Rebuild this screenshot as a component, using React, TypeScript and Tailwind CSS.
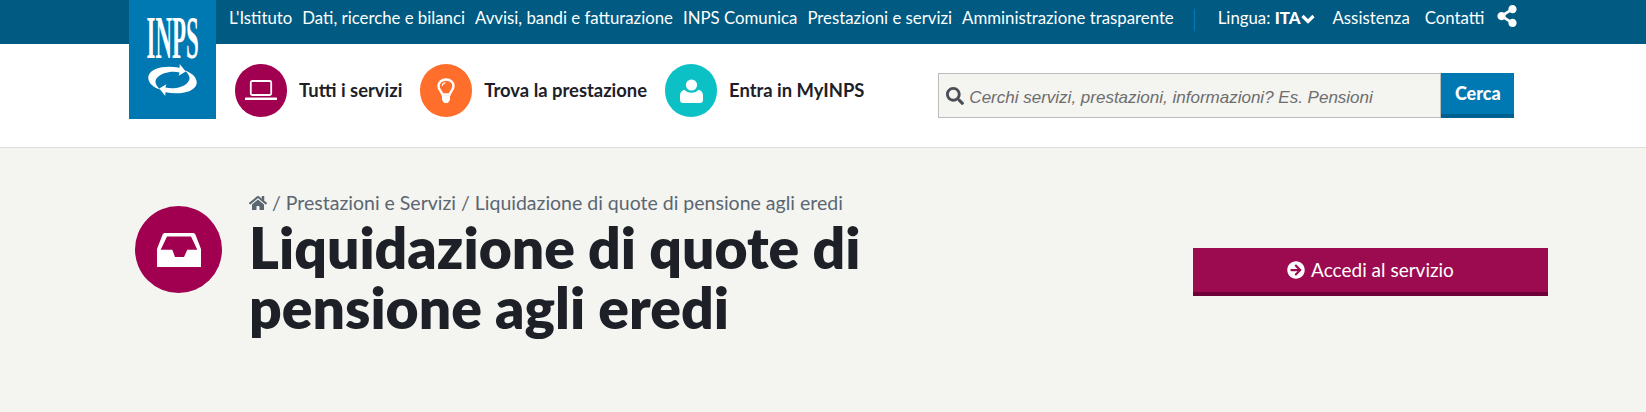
import React from "react";
import { FaArrowCircleRight, FaHome, FaSearch, FaShareAlt } from "react-icons/fa";

const topLinks = [
  "L'Istituto",
  "Dati, ricerche e bilanci",
  "Avvisi, bandi e fatturazione",
  "INPS Comunica",
  "Prestazioni e servizi",
  "Amministrazione trasparente",
];

const LaptopIcon = () => (
  <svg width="32" height="21" viewBox="0 0 32 21" fill="none" stroke="white">
    <rect x="5.800" y="1" width="20.400" height="14" rx="1.500" strokeWidth="1.800" />
    <path d="M1 18.800h30" strokeWidth="2.600" strokeLinecap="round" />
  </svg>
);

const BulbIcon = () => (
  <svg width="18" height="25" viewBox="0 0 18 25" fill="none">
    <path
      d="M9 1.500C4.500 1.500 1.500 4.500 1.500 8c0 3.700 3.200 5.500 3.900 8.500h7.200c.7-3 3.900-4.800 3.900-8.500 0-3.500-3-6.500-7.500-6.500z"
      stroke="white"
      strokeWidth="2.400"
    />
    <path d="M5 17.500h8v4.500L10.800 25H7.200L5 22z" fill="white" />
    <path d="M5.300 8c0-1.900 1.500-3.200 3.200-3.200" stroke="white" strokeWidth="1.200" />
  </svg>
);

const UserIcon = () => (
  <svg width="23" height="24" viewBox="0 0 23 24" fill="white">
    <circle cx="11.500" cy="6" r="5.600" />
    <path d="M4.500 10.800c1.500 2 4 3 7 3s5.500-1 7-3c2.800.8 4.500 2.800 4.500 6v4.200c0 1.700-1.300 3-3 3H3c-1.700 0-3-1.300-3-3v-4.200c0-3.200 1.700-5.200 4.500-6z" />
  </svg>
);

const InboxIcon = () => (
  <svg width="44" height="34" viewBox="0 0 44 34" fill="white">
    <path
      fillRule="evenodd"
      d="M8 0h28c1 0 2 .6 2.400 1.600L44 16v18H0V16L5.600 1.600C6 .6 7 0 8 0zM10 3.500L3.700 16.800h11.600L18 24h9l3.300-7.200h10L34 3.500z"
    />
  </svg>
);

const LogoSwirl = () => (
  <svg width="49" height="32" viewBox="0 0 48 30" fill="white" preserveAspectRatio="none">
    <path d="M37 7L31 0v3.500C18 1 3 3 .5 11c-1.500 6 4.500 11 11.500 13-5-4-6-8-3-11 4-5 15-7 22-5l-1 3z" />
    <path d="M11 23l6 7v-3.500c13 2.500 28 .5 30.500-7.500C49 13 43 8 36 6c5 4 6 8 3 11-4 5-15 7-22 5l1-3z" />
  </svg>
);

const ChevronIcon = () => (
  <svg width="14" height="10" viewBox="0 0 14 10" fill="none" stroke="white" strokeWidth="3.200">
    <path d="M1.500 2l5.500 5.500L12.500 2" />
  </svg>
);

const services = [
  { label: "Tutti i servizi", bg: "bg-[#a0004f]", icon: <LaptopIcon /> },
  { label: "Trova la prestazione", bg: "bg-[#ff6f2b]", icon: <BulbIcon /> },
  { label: "Entra in MyINPS", bg: "bg-[#0bc1c6]", icon: <UserIcon /> },
];

export default function App() {
  return (
    <div className="min-h-[412px] bg-[#f4f4f1] font-['Lato',sans-serif] overflow-hidden">
      <header className="relative bg-white border-b border-[#dedede]">
        <div className="absolute left-[129px] top-0 flex h-[119px] w-[87px] flex-col items-center bg-[#0079b3] pt-[10px]">
          <span className="h-[54px] scale-x-[0.37] font-['Liberation_Serif',serif] text-[62px] font-bold leading-[54px] text-white">
            INPS
          </span>
          <LogoSwirl />
        </div>

        <div className="flex h-[44px] items-center bg-[#005a82] pb-[8px] pl-[229px] text-[16.8px] text-white">
          <nav className="flex gap-[10px]">
            {topLinks.map((link) => (
              <a key={link}>{link}</a>
            ))}
          </nav>
          <div className="ml-[20px] mt-[4px] h-[22px] w-px bg-[#0079b3]" />
          <div className="ml-[23px] flex items-center">
            Lingua:&nbsp;<b className="font-black">ITA</b>
            <span className="ml-[1px] mt-[2px]">
              <ChevronIcon />
            </span>
          </div>
          <a className="ml-[17px]">Assistenza</a>
          <a className="ml-[15px]">Contatti</a>
          <FaShareAlt className="mb-[4px] ml-[12px] text-[22px]" />
        </div>

        <div className="flex h-[103px] pl-[235px] pt-[20px]">
          {services.map((item) => (
            <a key={item.label} className="mr-[18px] flex h-[53px] items-center">
              <span className={`flex h-[53px] w-[52px] items-center justify-center rounded-full ${item.bg}`}>
                {item.icon}
              </span>
              <span className="ml-[12px] text-[18.4px] font-bold text-[#1d2027]">{item.label}</span>
            </a>
          ))}

          <form className="ml-[56px] mt-[9px] flex h-[45px]">
            <div className="flex w-[503px] items-center border border-[#bcbcbc] bg-[#f4f4f1] pl-[7px]">
              <FaSearch className="text-[18px] text-[#4a4f55]" />
              <span className="ml-[5px] mt-[5px] font-['Liberation_Sans',sans-serif] text-[17px] italic text-[#6d6d6d]">
                Cerchi servizi, prestazioni, informazioni? Es. Pensioni
              </span>
            </div>
            <button className="w-[73px] border-b-[4px] border-[#00608f] bg-[#0079b3] text-[18px] font-black text-white">
              Cerca
            </button>
          </form>
        </div>
      </header>

      <section className="flex pl-[135px] pt-[44px]">
        <div className="mt-[14px] flex h-[87px] w-[87px] items-center justify-center rounded-full bg-[#a0004f] text-white">
          <InboxIcon />
        </div>
        <div className="ml-[27px] w-[660px]">
          <div className="flex items-center text-[19.500px] leading-[22px] text-[#5b6670]">
            <FaHome className="mr-[5px] text-[18px]" />/ Prestazioni e Servizi / Liquidazione di quote di pensione agli eredi
          </div>
          <h1 className="mt-[3px] text-[57px] font-extrabold leading-[60px] text-[#1d2027]">
            Liquidazione di quote di pensione agli eredi
          </h1>
        </div>
        <a className="ml-[284px] mt-[56px] flex h-[48px] w-[355px] items-center justify-center border-b-[4px] border-[#6d0036] bg-[#9c0a4f] text-[19px] text-white">
          <FaArrowCircleRight className="mr-[6px] text-[18px]" />
          Accedi al servizio
        </a>
      </section>
    </div>
  );
}
